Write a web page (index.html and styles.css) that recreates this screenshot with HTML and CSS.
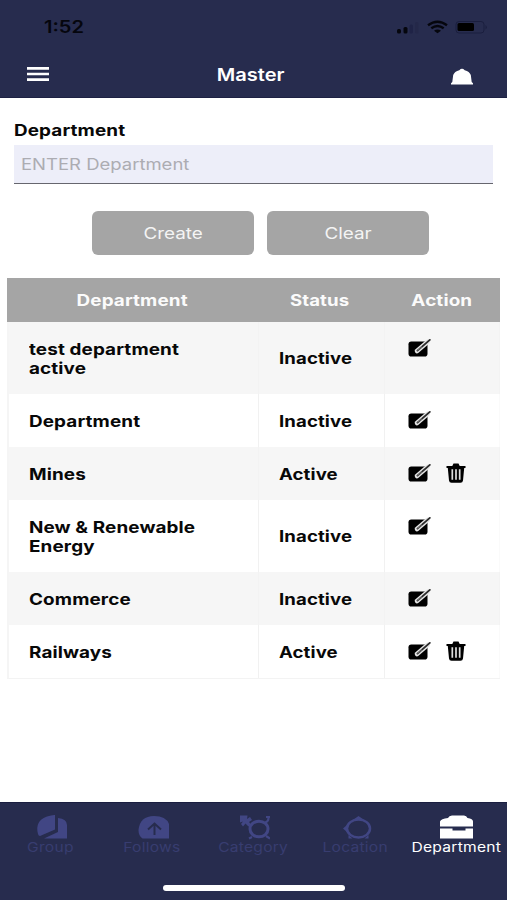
FILE: index.html
```html
<!DOCTYPE html>
<html lang="en">
<head>
<meta charset="utf-8">
<title>Master</title>
<link rel="stylesheet" href="styles.css">
</head>
<body>
<svg width="0" height="0" class="defs" aria-hidden="true">
  <symbol id="edit" viewBox="0 0 24 20">
    <rect x="1.5" y="3.5" width="19" height="15" rx="2.8" fill="#000"/>
    <path d="M10 13 20.500 4" stroke="#e6e6e6" stroke-width="4.600" stroke-linecap="round"/>
    <path d="M10.500 12.600 22.800 1.900" stroke="#2a2a2a" stroke-width="1.900" stroke-linecap="round"/>
    <path d="M10.500 12.600 15 8.700" stroke="#999" stroke-width=".8"/>
  </symbol>
  <symbol id="trash" viewBox="0 0 20 20">
    <path d="M.5 3h5.800L7.500.5h5L13.700 3h5.800v2h-1.300l-1.200 12.500q-.3 2.200-2.500 2.200h-9q-2.200 0-2.500-2.200L1.800 5H.5z" fill="#000"/>
    <path d="M6.300 6.300v10.500M10 6.300v10.500M13.700 6.300v10.500" stroke="#ddd" stroke-width="1.700"/>
  </symbol>
</svg>
<div class="app">
  <header class="top">
    <div class="status">
      <span class="time"><span class="t">1:52</span></span>
      <svg width="92" height="14" viewBox="0 0 92 14">
        <rect x="2" y="9" width="4" height="4.500" rx="1.500" fill="#05060d"/><rect x="8.500" y="7" width="4" height="6.500" rx="1.500" fill="#05060d"/>
        <rect x="14.500" y="4.500" width="3.500" height="9" rx="1.500" fill="#1f2346"/><rect x="20" y="2" width="3.500" height="11.500" rx="1.500" fill="#242849"/>
        <path d="M33 5.300Q42.500-1.800 52 5.300M36.300 8.300q6.200-4.600 12.400 0" fill="none" stroke="#05060d" stroke-width="2.400"/><path d="m39 10.700q3.500-2.300 7 0L42.500 13.200z" fill="#05060d"/>
        <rect x="61" y="1.500" width="28" height="11.500" rx="3" fill="none" stroke="#1a1e3e"/><rect x="62.500" y="3" width="16.500" height="8" rx="1.500" fill="#000"/><path d="M90.500 5q2.500 2.200 0 4.500z" fill="#1a1e3e"/>
      </svg>
    </div>
    <div class="nav">
      <svg width="22" height="14" viewBox="0 0 22 14"><path d="M0 1.400h22M0 7h22M0 12.600h22" stroke="#fff" stroke-width="2.600"/></svg>
      <h1><span class="t">Master</span></h1>
      <svg width="22" height="17" viewBox="0 0 22 17"><path d="M0 16.500v-1.200l1.300-1.300L2.200 7Q3.500 3.500 8.300 2.200 11-.5 13.700 2.200 18.500 3.500 19.800 7l.9 7 1.300 1.300v1.200z" fill="#fff"/></svg>
    </div>
  </header>
  <main>
    <label class="label" for="dept"><span class="t left">Department</span></label>
    <div class="field" id="dept"><span class="t left">ENTER Department</span></div>
    <div class="buttons">
      <button><span class="t">Create</span></button>
      <button><span class="t">Clear</span></button>
    </div>
    <div class="table">
      <div class="row head"><div><span class="t">Department</span></div><div><span class="t">Status</span></div><div><span class="t">Action</span></div></div>
      <div class="row tall alt"><div><span class="t left">test department<br>active</span></div><div><span class="t left">Inactive</span></div><div><svg><use href="#edit"/></svg></div></div>
      <div class="row"><div><span class="t left">Department</span></div><div><span class="t left">Inactive</span></div><div><svg><use href="#edit"/></svg></div></div>
      <div class="row alt"><div><span class="t left">Mines</span></div><div><span class="t left">Active</span></div><div><svg><use href="#edit"/></svg><svg class="trash"><use href="#trash"/></svg></div></div>
      <div class="row tall"><div><span class="t left">New &amp; Renewable<br>Energy</span></div><div><span class="t left">Inactive</span></div><div><svg><use href="#edit"/></svg></div></div>
      <div class="row alt"><div><span class="t left">Commerce</span></div><div><span class="t left">Inactive</span></div><div><svg><use href="#edit"/></svg></div></div>
      <div class="row last"><div><span class="t left">Railways</span></div><div><span class="t left">Active</span></div><div><svg><use href="#edit"/></svg><svg class="trash"><use href="#trash"/></svg></div></div>
    </div>
  </main>
  <footer>
    <nav class="tabs">
      <div class="tab"><svg viewBox="0 0 34 26"><path d="M4 20Q.5 7 13 2.500 18 .8 21 1v14.500L6 22Q4.500 22 4 20zM24 4Q33 5 33 11v13.500H10L24 18z" fill="#414684"/></svg><span class="t">Group</span></div>
      <div class="tab"><svg viewBox="0 0 34 26"><path d="M7.500 24.500Q3.500 22 3.500 16 5 2 19 2q12 0 15 8v14.500z" fill="#414684"/><path d="M19.500 21V10M13 15.500 19.500 9.500 26 15.500" fill="none" stroke="#272c4e" stroke-width="2"/></svg><span class="t">Follows</span></div>
      <div class="tab"><svg viewBox="0 0 34 26"><path d="M4 1.500h7.500L11 5l3-2 2 3-3 2 2.500 3-3 1.500-3-3L7 12.500 5 10l2-2.500-3 1z" fill="#414684"/><path d="M29 8.500q4-1 3.500-6.500M30 3h5M16 23l-3 1.500M30 22l4 2.500" fill="none" stroke="#414684" stroke-width="2.200"/><ellipse cx="23" cy="15" rx="9" ry="7.800" fill="none" stroke="#414684" stroke-width="3"/></svg><span class="t">Category</span></div>
      <div class="tab"><svg viewBox="0 0 34 26"><ellipse cx="20.500" cy="14.500" rx="11.500" ry="9" fill="none" stroke="#414684" stroke-width="2.500"/><path d="M15.500 5.500 20.500 2l5 3.500zM9.500 10.500 5 14.500l4.500 4zM10.500 24.500v-3.500l4 3.500zM30.500 24.500v-3.500l-4 3.500z" fill="#414684"/></svg><span class="t">Location</span></div>
      <div class="tab active"><svg viewBox="0 0 34 26"><path d="M1 12.500V7.500q1-3 8-3.500 1-2.500 4-2.500h12q2.500 0 3.500 2.500Q34 4.500 34 7.500v5zM1 14.500h12.500v2h13v-2H34v10H1z" fill="#fff"/></svg><span class="t">Department</span></div>
    </nav>
    <div class="home"></div>
  </footer>
</div>
</body>
</html>
```
FILE: styles.css
```css
* { box-sizing: border-box; }
body { margin: 0; background: #fff; font-family: Inter, "Liberation Sans", sans-serif; font-size: 16px; color: #080808; }
.defs { position: absolute; }
.app { width: 507px; height: 900px; display: flex; flex-direction: column; }
.t { display: inline-block; transform: scaleX(1.18); white-space: nowrap; }
.t.left { transform-origin: left; }
svg { display: block; flex: none; }

.top { height: 98px; background: #272c4e; border-bottom: 1px solid #1d2143; }
.status { height: 54px; display: flex; justify-content: space-between; align-items: center; padding: 0 20px 0 47px; }
.time { font-weight: 600; font-size: 17px; color: #05060d; }
.nav { height: 40px; display: flex; justify-content: space-between; align-items: center; padding: 0 34px 0 27px; }
.nav svg:last-child { margin-top: 5px; }
h1 { margin: 1px 0 0; padding-left: 1px; font-size: 17px; font-weight: 600; color: #fff; }

main { flex: 1; padding: 22px 7px 0; }
.label { display: block; height: 25px; line-height: 20px; margin-left: 7px; font-weight: 650; letter-spacing: .1px; }
.field { height: 39px; margin: 0 7px; padding-left: 7px; line-height: 38px; background: #edeef9; border-bottom: 1px solid #66666e; color: #acacb2; }
.field .t { transform: scaleX(1.155); }
.buttons { display: flex; gap: 13px; padding-left: 85px; margin: 27px 0 23px; }
button { width: 162px; height: 44px; padding: 0; border: 0; border-radius: 6px; background: #a5a5a5; color: #f4f4f4; font: 400 16px Inter, "Liberation Sans", sans-serif; }

.table { width: 493px; }
.row { display: grid; grid-template-columns: 250px 126px 1fr; height: 53px; font-weight: 650; letter-spacing: .1px; line-height: 19px; border-left: 2px solid #f5f5f5; }
.row > div { display: flex; align-items: center; padding-left: 20px; border-right: 1px solid #f1f1f1; }
.row > div .t { margin-top: 1px; }
.row > div:nth-child(2) .t { transform: scaleX(1.16); }
.row > div:last-child { padding: 0 0 2px 22px; gap: 15px; border-color: #fafafa; }
.row svg { width: 24px; height: 20px; }
.row svg.trash { width: 20px; }
.row.tall { height: 72px; }
.row.tall > div:last-child { align-items: flex-start; padding-top: 16px; }
.row.alt, .row.alt > div { background: #f6f6f6; }
.row.alt > div { border-color: #f3f3f3; }
.row.last { height: 54px; border-bottom: 1px solid #f3f3f3; }
.row.head { height: 44px; background: #a5a5a5; color: #fbfbfb; border: 0; }
.row.head > div, .row.head > div:last-child { justify-content: center; padding: 0; border: 0; }
.row.head .t { margin-top: 0; }

footer { height: 98px; background: #272c4e; border-top: 1px solid #1a1e40; }
.tabs { height: 82px; display: grid; grid-template-columns: repeat(5, 1fr); }
.tab { display: flex; flex-direction: column; align-items: center; padding-top: 11px; color: #383d70; font-size: 13px; line-height: 18px; letter-spacing: .2px; }
.tab .t { transform: scaleX(1.2); }
.tab svg { width: 34px; height: 26px; margin-bottom: -2px; }
.tab.active { color: #fff; }
.home { width: 182px; height: 6px; margin: 0 auto; border-radius: 3px; background: #fff; }
```
